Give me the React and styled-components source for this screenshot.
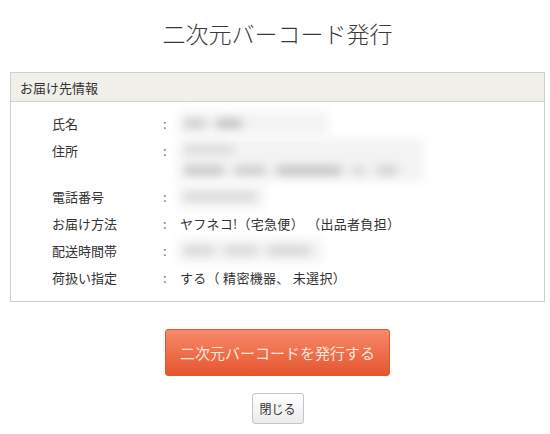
import React from "react";
import styled, { createGlobalStyle } from "styled-components";

const GlobalStyle = createGlobalStyle`
  body {
    margin: 0;
    background: #fff;
    font-family: "Noto Sans CJK JP", "Noto Sans", sans-serif;
    color: #333;
  }
`;

const Page = styled.div`
  display: flex;
  flex-direction: column;
  align-items: center;
  padding: 17px 5px 0 10px;
`;

const Title = styled.h1`
  margin: 0;
  font-size: 23px;
  line-height: 32px;
  font-weight: 300;
  color: #3a3a3a;
`;

const Panel = styled.section`
  align-self: stretch;
  margin-top: 23px;
  border: 1px solid #cfcfcf;
`;

const PanelHeader = styled.div`
  height: 28px;
  padding-left: 9px;
  display: flex;
  align-items: center;
  background: #f1efea;
  border-bottom: 1px solid #d2d2d2;
  font-size: 13px;
`;

const InfoGrid = styled.div`
  display: grid;
  grid-template-columns: 111px 17px 1fr;
  padding: 8px 0 10px 41px;
  font-size: 13px;
  line-height: 19px;
`;

const Label = styled.div`
  padding: 4px 0;
`;

const Colon = styled.div`
  padding: 4px 0;
  color: #777;
`;

const Value = styled.div`
  padding: 4px 0;
  min-height: ${(p) => (p.lines || 1) * 19}px;
  letter-spacing: 0.3px;
`;

const BlurBox = styled.div`
  width: ${(p) => p.w}px;
  height: ${(p) => p.lines * 19 + 4}px;
  margin: -2px 0 -2px -2px;
  background: #f3f3f3;
  filter: blur(5px);
  display: flex;
  flex-direction: column;
  justify-content: space-around;
  padding: 0 6px;
  box-sizing: border-box;
`;

const BlobLine = styled.div`
  display: flex;
  gap: ${(p) => p.gap || 10}px;
`;

const Blob = styled.span`
  display: block;
  width: ${(p) => p.w}px;
  height: 9px;
  border-radius: 4px;
  background: ${(p) => p.c || "#c9c9c9"};
`;

const Actions = styled.div`
  display: flex;
  flex-direction: column;
  align-items: center;
  margin-top: 27px;
  gap: 17px;
`;

const IssueButton = styled.button`
  width: 225px;
  height: 47px;
  border: 1px solid #dc5630;
  border-radius: 3px;
  background: linear-gradient(#f8896b, #e5562e);
  color: #fde6dd;
  font-family: inherit;
  font-size: 15px;
  cursor: pointer;
`;

const CloseButton = styled.button`
  width: 52px;
  height: 31px;
  padding: 0;
  border: 1px solid #c4c4c4;
  border-radius: 3px;
  background: linear-gradient(#ffffff, #ebebeb);
  color: #333;
  font-family: inherit;
  font-size: 12px;
  cursor: pointer;
`;

function Blurred({ w, lines = 1, rows }) {
  return (
    <BlurBox w={w} lines={lines}>
      {rows.map((row, i) => (
        <BlobLine key={i}>
          {row.map((b, j) => (
            <Blob key={j} w={b[0]} c={b[1]} />
          ))}
        </BlobLine>
      ))}
    </BlurBox>
  );
}

export default function App() {
  return (
    <>
      <GlobalStyle />
      <Page>
        <Title>二次元バーコード発行</Title>
        <Panel>
          <PanelHeader>お届け先情報</PanelHeader>
          <InfoGrid>
            <Label>氏名</Label>
            <Colon>:</Colon>
            <Value>
              <Blurred w={150} rows={[[[22, "#cdcdcd"], [26, "#bfbfbf"]]]} />
            </Value>

            <Label>住所</Label>
            <Colon>:</Colon>
            <Value lines={2}>
              <Blurred
                w={245}
                lines={2}
                rows={[
                  [[50, "#dadada"]],
                  [[40, "#c6c6c6"], [32, "#cbcbcb"], [66, "#c2c2c2"], [14, "#d8d8d8"], [22, "#d0d0d0"]],
                ]}
              />
            </Value>

            <Label>電話番号</Label>
            <Colon>:</Colon>
            <Value>
              <Blurred w={86} rows={[[[72, "#d8d8d8"]]]} />
            </Value>

            <Label>お届け方法</Label>
            <Colon>:</Colon>
            <Value>ヤフネコ!（宅急便） （出品者負担）</Value>

            <Label>配送時間帯</Label>
            <Colon>:</Colon>
            <Value>
              <Blurred w={144} rows={[[[30, "#d6d6d6"], [34, "#d8d8d8"], [42, "#d4d4d4"]]]} />
            </Value>

            <Label>荷扱い指定</Label>
            <Colon>:</Colon>
            <Value>する（ 精密機器、 未選択）</Value>
          </InfoGrid>
        </Panel>
        <Actions>
          <IssueButton>二次元バーコードを発行する</IssueButton>
          <CloseButton>閉じる</CloseButton>
        </Actions>
      </Page>
    </>
  );
}
